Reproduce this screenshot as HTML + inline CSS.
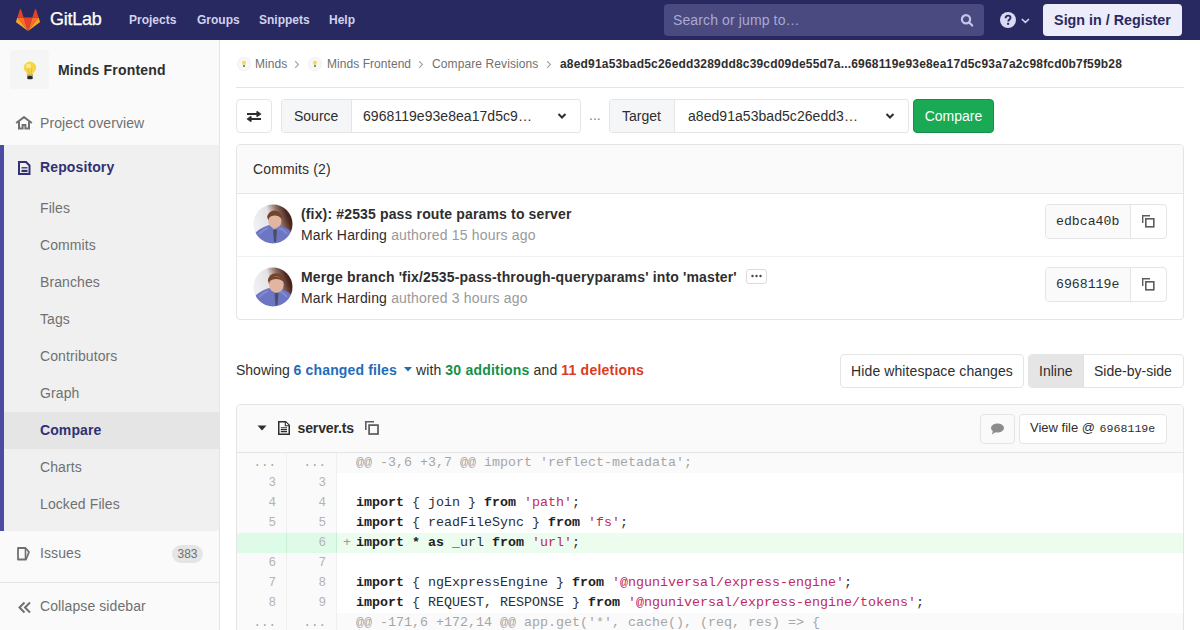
<!DOCTYPE html>
<html><head><meta charset="utf-8">
<style>
*{box-sizing:border-box;margin:0;padding:0}
html,body{width:1200px;height:630px;overflow:hidden;background:#fff}
body{font-family:"Liberation Sans",sans-serif;font-size:14px;color:#2e2e2e;position:relative}
.a{position:absolute;white-space:nowrap}
.t14{font-size:14px;line-height:16px}
.t12{font-size:12px;line-height:14px}
.t13{font-size:13px;line-height:15px}
.b{font-weight:bold;letter-spacing:0.15px}
.mono{font-family:"Liberation Mono",monospace}
/* header */
#hdr{position:absolute;left:0;top:0;width:1200px;height:40px;background:#292961}
.nav{font-size:12px;line-height:14px;font-weight:bold;color:#d2d2ee;top:13px}
/* sidebar */
#side{position:absolute;left:0;top:40px;width:220px;height:590px;background:#fafafa;border-right:1px solid #e5e5e5}
.si{color:#707070;font-size:14px;line-height:16px;left:40px;letter-spacing:0.1px}
.box{position:absolute;border:1px solid #e5e5e5;border-radius:4px;background:#fff}
.code{font-family:"Liberation Mono",monospace;font-size:13.33px;line-height:20px}
.row{position:absolute;left:237px;width:946px;height:20px}
.ln{position:absolute;top:0;height:20px;width:50px;background:#fafafa;border-right:1px solid #f0f0f0;color:#b3b3b3;text-align:right;padding-right:10px;font-family:"Liberation Mono",monospace;font-size:12.5px;line-height:20px}
.ln1{left:0}.ln2{left:50px}
.txt{position:absolute;left:100px;top:0;right:0;height:20px;padding-left:19px;white-space:pre;font-family:"Liberation Mono",monospace;font-size:13.33px;line-height:20px;color:#2e2e2e}
.match .ln,.match .txt{background:#fafafa;color:#a6a6a6}
.k{font-weight:bold;color:#222}
.s{color:#bf2a5c}
.add .txt{background:#ecfdf0}
.add .ln{background:#ddfbe6;border-right-color:#c7f0d2}
</style></head><body>
<div id="hdr">
  <svg class="a" style="left:16px;top:9px" width="24" height="22" viewBox="0 0 36 33">
    <path fill="#e24329" d="M18 33l6.6-20.4H11.4z"/>
    <path fill="#fc6d26" d="M18 33L11.4 12.6H2.1z"/>
    <path fill="#fca326" d="M2.1 12.6L.1 18.8c-.2.6 0 1.2.5 1.6L18 33z"/>
    <path fill="#e24329" d="M2.1 12.6h9.3L7.4.4c-.2-.6-1.1-.6-1.3 0z"/>
    <path fill="#fc6d26" d="M18 33l6.6-20.4h9.3z"/>
    <path fill="#fca326" d="M33.9 12.6l2 6.2c.2.6 0 1.2-.5 1.6L18 33z"/>
    <path fill="#e24329" d="M33.9 12.6h-9.3L28.6.4c.2-.6 1.1-.6 1.3 0z"/>
  </svg>
  <div class="a" style="left:50px;top:9px;font-size:18px;line-height:20px;color:#fff;letter-spacing:-0.25px;-webkit-text-stroke:0.25px #fff">GitLab</div>
  <div class="a nav" style="left:129px">Projects</div>
  <div class="a nav" style="left:197px">Groups</div>
  <div class="a nav" style="left:259px">Snippets</div>
  <div class="a nav" style="left:329px">Help</div>
  <div class="a" style="left:664px;top:4px;width:320px;height:32px;background:#4a4a80;border-radius:4px"></div>
  <div class="a t14" style="left:673px;top:12px;color:#a9a9d2;letter-spacing:0.12px">Search or jump to…</div>
  <svg class="a" style="left:960px;top:13px" width="14" height="14" viewBox="0 0 14 14"><circle cx="6" cy="6.3" r="4.1" fill="none" stroke="#c6c6ec" stroke-width="2.2"/><path d="M9.2 9.5l3 3" stroke="#c6c6ec" stroke-width="2.2" stroke-linecap="round"/></svg>
  <svg class="a" style="left:1000px;top:12px" width="32" height="17" viewBox="0 0 32 17"><circle cx="8" cy="8" r="8" fill="#dadaf4"/><path d="M5.6 6.2c0-1.6 1.1-2.6 2.5-2.6s2.4.9 2.4 2.2c0 1.6-2.2 1.8-2.2 3.6" fill="none" stroke="#292961" stroke-width="1.9"/><rect x="7.1" y="10.8" width="2" height="2" fill="#292961"/><path d="M21.8 7l3.6 3.4L29 7" fill="none" stroke="#d2d2ee" stroke-width="1.6"/></svg>
  <div class="a" style="left:1043px;top:4px;width:139px;height:32px;background:#ececfa;border-radius:4px"></div>
  <div class="a t14" style="left:1043px;top:12px;width:139px;text-align:center;font-weight:bold;color:#292961;font-size:14.3px">Sign in / Register</div>
</div>

<div id="side"></div>
<!-- sidebar content (page coords) -->
<div class="a" style="left:10px;top:50px;width:39px;height:39px;background:#f5f5f5;border-radius:4px"></div>
<svg class="a" style="left:23px;top:61px" width="14" height="19" viewBox="0 0 14 19">
  <path d="M7 0.8C3.6 0.8 0.8 3.3 0.8 6.5c0 2.2 1.2 3.4 2.2 4.6.7.9.9 1.8.9 2.6h6.2c0-.8.2-1.7.9-2.6 1-1.2 2.2-2.4 2.2-4.6C13.2 3.3 10.4 0.8 7 0.8z" fill="#f6d646"/>
  <ellipse cx="5.5" cy="5" rx="2.5" ry="2.3" fill="#faeb90"/>
  <path d="M5.2 7.5l1 6M8.8 7.5l-1 6" stroke="#e0b020" stroke-width="0.7" fill="none"/>
  <rect x="3.9" y="13.5" width="6.2" height="1.6" fill="#b0a070"/>
  <rect x="4.2" y="15" width="5.6" height="3.3" rx="1.4" fill="#2a2a2a"/>
</svg>
<div class="a t14 b" style="left:58px;top:62px;color:#2e2e2e;letter-spacing:0.2px">Minds Frontend</div>

<svg class="a" style="left:15px;top:116px" width="18" height="14" viewBox="0 0 18 14"><path d="M1.2 7L9 1.2 16.8 7" fill="none" stroke="#707070" stroke-width="2.1" stroke-linejoin="miter"/><path d="M4 5.5V12.5h3.6V9h2.8v3.5H14V5.5" fill="none" stroke="#707070" stroke-width="2"/></svg>
<div class="a si" style="top:115px">Project overview</div>

<div class="a" style="left:0;top:145px;width:219px;height:386px;background:#f0f0f0"></div>
<div class="a" style="left:0;top:145px;width:4px;height:386px;background:#4b4ba3"></div>
<div class="a" style="left:4px;top:412px;width:215px;height:37px;background:#e5e5e5"></div>
<svg class="a" style="left:18px;top:161px" width="13" height="14" viewBox="0 0 13 14"><path d="M1 1h7l3.5 3.5V13H1z" fill="none" stroke="#303073" stroke-width="2" stroke-linejoin="miter"/><path d="M3.5 6.8h6" stroke="#303073" stroke-width="1.3"/><rect x="3.5" y="8.8" width="6" height="2.3" fill="#303073"/></svg>
<div class="a t14" style="left:40px;top:159px;font-weight:bold;color:#303073;letter-spacing:0.12px">Repository</div>
<div class="a si" style="top:200px">Files</div>
<div class="a si" style="top:237px">Commits</div>
<div class="a si" style="top:274px">Branches</div>
<div class="a si" style="top:311px">Tags</div>
<div class="a si" style="top:348px">Contributors</div>
<div class="a si" style="top:385px">Graph</div>
<div class="a si" style="top:422px;font-weight:bold;color:#303073">Compare</div>
<div class="a si" style="top:459px">Charts</div>
<div class="a si" style="top:496px">Locked Files</div>

<svg class="a" style="left:16px;top:546px" width="16" height="15" viewBox="0 0 16 15"><path d="M2 2h7.5l3.5 4-3 7.5H2z" fill="none" stroke="#707070" stroke-width="1.8" stroke-linejoin="round"/><path d="M9.5 2v11.5" stroke="#707070" stroke-width="1.6"/></svg>
<div class="a si" style="top:545px">Issues</div>
<div class="a" style="left:172px;top:545px;width:31px;height:18px;border-radius:9px;background:#e5e5e5"></div>
<div class="a t12" style="left:172px;top:547px;width:31px;text-align:center;color:#707070">383</div>
<div class="a" style="left:0;top:582px;width:219px;height:1px;background:#e5e5e5"></div>
<svg class="a" style="left:17px;top:601px" width="15" height="13" viewBox="0 0 15 13"><path d="M7.5 1.5L2.5 6.5l5 5M13 1.5L8 6.5l5 5" fill="none" stroke="#707070" stroke-width="2"/></svg>
<div class="a si" style="top:598px">Collapse sidebar</div>

<!-- MAIN -->
<svg class="a" style="left:237px;top:57px" width="14" height="14" viewBox="0 0 14 14"><circle cx="7" cy="7" r="6.6" fill="#f7f7f7" stroke="#ececec" stroke-width="0.7"/><path d="M7 3.6c-1.2 0-2 .8-2 1.9 0 .9.7 1.5.9 2.4h2.2c.2-.9.9-1.5.9-2.4 0-1.1-.8-1.9-2-1.9z" fill="#f1dc6a"/><rect x="6.1" y="8.3" width="1.8" height="1.5" rx="0.5" fill="#444"/></svg>
<div class="a t12" style="left:255px;top:57px;color:#707070;letter-spacing:0.05px">Minds</div>
<svg class="a" style="left:294px;top:60px" width="6" height="9" viewBox="0 0 6 9"><path d="M1.2 1.2l3.2 3.3-3.2 3.3" fill="none" stroke="#a0a0a0" stroke-width="1.1"/></svg>
<svg class="a" style="left:308px;top:57px" width="14" height="14" viewBox="0 0 14 14"><circle cx="7" cy="7" r="6.6" fill="#f7f7f7" stroke="#ececec" stroke-width="0.7"/><path d="M7 3.6c-1.2 0-2 .8-2 1.9 0 .9.7 1.5.9 2.4h2.2c.2-.9.9-1.5.9-2.4 0-1.1-.8-1.9-2-1.9z" fill="#f1dc6a"/><rect x="6.1" y="8.3" width="1.8" height="1.5" rx="0.5" fill="#444"/></svg>
<div class="a t12" style="left:327px;top:57px;color:#707070;letter-spacing:0.05px">Minds Frontend</div>
<svg class="a" style="left:418px;top:60px" width="6" height="9" viewBox="0 0 6 9"><path d="M1.2 1.2l3.2 3.3-3.2 3.3" fill="none" stroke="#a0a0a0" stroke-width="1.1"/></svg>
<div class="a t12" style="left:432px;top:57px;color:#707070;letter-spacing:0.1px">Compare Revisions</div>
<svg class="a" style="left:546px;top:60px" width="6" height="9" viewBox="0 0 6 9"><path d="M1.2 1.2l3.2 3.3-3.2 3.3" fill="none" stroke="#a0a0a0" stroke-width="1.1"/></svg>
<div class="a t12" style="left:560px;top:57px;font-weight:bold;color:#2e2e2e;letter-spacing:0.18px">a8ed91a53bad5c26edd3289dd8c39cd09de55d7a...6968119e93e8ea17d5c93a7a2c98fcd0b7f59b28</div>
<div class="a" style="left:236px;top:87px;width:948px;height:1px;background:#e5e5e5"></div>

<!-- compare form -->
<div class="box" style="left:236px;top:99px;width:36px;height:34px"></div>
<svg class="a" style="left:246px;top:111px" width="16" height="11" viewBox="0 0 16 11"><path d="M1 3h13M10.5 0.5L14 3l-3.5 2.5M15 8H2M5.5 5.5L2 8l3.5 2.5" fill="none" stroke="#2e2e2e" stroke-width="1.8"/></svg>

<div class="box" style="left:281px;top:99px;width:300px;height:34px;overflow:hidden;border-radius:3px">
  <div class="a" style="left:0;top:0;width:70px;height:32px;background:#f5f6f7;border-right:1px solid #e5e5e5"></div>
</div>
<div class="a t14" style="left:294px;top:108px">Source</div>
<div class="a t14" style="left:363px;top:108px;letter-spacing:0.05px">6968119e93e8ea17d5c9…</div>
<svg class="a" style="left:557px;top:112px" width="10" height="8" viewBox="0 0 10 8"><path d="M1.5 2l3.5 3.5L8.5 2" fill="none" stroke="#2e2e2e" stroke-width="2"/></svg>
<div class="a t14" style="left:589px;top:107px;color:#808080">...</div>

<div class="box" style="left:609px;top:99px;width:300px;height:34px;overflow:hidden;border-radius:3px">
  <div class="a" style="left:0;top:0;width:65px;height:32px;background:#f5f6f7;border-right:1px solid #e5e5e5"></div>
</div>
<div class="a t14" style="left:622px;top:108px">Target</div>
<div class="a t14" style="left:688px;top:108px;letter-spacing:0.05px">a8ed91a53bad5c26edd3…</div>
<svg class="a" style="left:885px;top:112px" width="10" height="8" viewBox="0 0 10 8"><path d="M1.5 2l3.5 3.5L8.5 2" fill="none" stroke="#2e2e2e" stroke-width="2"/></svg>

<div class="a" style="left:913px;top:99px;width:81px;height:34px;background:#1aaa55;border:1px solid #168f48;border-radius:4px"></div>
<div class="a t14" style="left:913px;top:108px;width:81px;text-align:center;color:#fff">Compare</div>

<!-- commits -->
<div class="box" style="left:236px;top:144px;width:948px;height:176px;overflow:hidden">
  <div class="a" style="left:0;top:0;width:946px;height:49px;background:#fafafa;border-bottom:1px solid #e5e5e5"></div>
  <div class="a" style="left:0;top:111px;width:946px;height:1px;background:#f0f0f0"></div>
</div>
<div class="a t14" style="left:253px;top:161px;letter-spacing:0.15px">Commits (2)</div>

<svg class="a" style="left:253px;top:204px" width="40" height="40" viewBox="0 0 40 40">
  <defs><clipPath id="cc1"><circle cx="20" cy="20" r="19.5"/></clipPath><linearGradient id="bg1" x1="0" y1="0.35" x2="1" y2="0"><stop offset="0" stop-color="#f0f0f4"/><stop offset="0.38" stop-color="#e4e2e4"/><stop offset="0.6" stop-color="#8a6a60"/><stop offset="0.78" stop-color="#4e2820"/><stop offset="1" stop-color="#2a120c"/></linearGradient><filter id="blr" x="-10%" y="-10%" width="120%" height="120%"><feGaussianBlur stdDeviation="0.5"/></filter></defs>
  <g clip-path="url(#cc1)"><g filter="url(#blr)">
    <rect width="40" height="40" fill="url(#bg1)"/>
    <path d="M0 40V32c3-5 8-8 12-9.5l4-1.5 5 2 5-2 5 2c4 1.5 7 4 9 8V40z" fill="#6c76c2"/>
    <path d="M6 30c3-3 6-5 9-6M26 24c3 1 6 3 8 6" stroke="#7f8ad0" stroke-width="2" fill="none"/>
    <path d="M17.5 21l4 6 4-6z" fill="#c9a090"/>
    <path d="M20.0 26l1 12h2l1-12-2-1z" fill="#4a4f6a"/>
    <ellipse cx="21.5" cy="13.0" rx="7.1" ry="6.5" fill="#74442c"/><ellipse cx="21.9" cy="17.0" rx="6.6" ry="7.2" fill="#e0b6a2"/><path d="M15.0 13.5c1.5-2.5 3.5-3.2 6.8 -3.2s4.8 .6 6.6 2.6" stroke="#74442c" stroke-width="2.2" fill="none"/>
  </g></g>
</svg>
<div class="a t14 b" style="left:301px;top:206px">(fix): #2535 pass route params to server</div>
<div class="a t14" style="left:301px;top:227px"><span style="letter-spacing:0.17px">Mark Harding <span style="color:#999">authored 15 hours ago</span></span></div>
<div class="a" style="left:1045px;top:204px;width:122px;height:35px;border:1px solid #e5e5e5;border-radius:4px;overflow:hidden;background:#fff">
  <div class="a" style="left:0;top:0;width:85px;height:33px;background:#fafafa;border-right:1px solid #e5e5e5"></div>
</div>
<div class="a mono" style="left:1056px;top:214px;font-size:13.2px;line-height:16px;color:#2e2e2e">edbca40b</div>
<svg class="a" style="left:1141px;top:214px" width="15" height="15" viewBox="0 0 15 15"><path d="M1.7 9V1.7H9" fill="none" stroke="#5c5c5c" stroke-width="1.4"/><rect x="4.8" y="4.8" width="8" height="8" fill="none" stroke="#5c5c5c" stroke-width="1.6"/></svg>

<svg class="a" style="left:253px;top:267px" width="40" height="40" viewBox="0 0 40 40">
  <defs><clipPath id="cc2"><circle cx="20" cy="20" r="19.5"/></clipPath></defs>
  <g clip-path="url(#cc2)"><g filter="url(#blr)">
    <rect width="40" height="40" fill="url(#bg1)"/>
    <path d="M0 40V32c3-5 8-8 12-9.5l4-1.5 5 2 5-2 5 2c4 1.5 7 4 9 8V40z" fill="#6c76c2"/>
    <path d="M6 30c3-3 6-5 9-6M26 24c3 1 6 3 8 6" stroke="#7f8ad0" stroke-width="2" fill="none"/>
    <path d="M19 21.5l4 6 4-6z" fill="#c9a090"/>
    <path d="M21.5 26.5l1 12h2l1-12-2-1z" fill="#4a4f6a"/>
    <ellipse cx="23.0" cy="13.5" rx="7.8999999999999995" ry="7.300000000000001" fill="#74442c"/><ellipse cx="23.4" cy="17.5" rx="7.3999999999999995" ry="8.0" fill="#e0b6a2"/><path d="M15.700000000000001 14.0c1.5-2.5 3.5-3.2 7.6 -3.2s4.8 .6 7.3999999999999995 2.6" stroke="#74442c" stroke-width="2.2" fill="none"/>
  </g></g>
</svg>
<div class="a t14 b" style="left:301px;top:269px">Merge branch 'fix/2535-pass-through-queryparams' into 'master'</div>
<div class="a" style="left:746px;top:269px;width:21px;height:15px;border:1px solid #dcdcdc;border-radius:3px;background:#fff"></div>
<svg class="a" style="left:750px;top:274px" width="13" height="4" viewBox="0 0 13 4"><circle cx="2.5" cy="2" r="1.2" fill="#444"/><circle cx="6.5" cy="2" r="1.2" fill="#444"/><circle cx="10.5" cy="2" r="1.2" fill="#444"/></svg>
<div class="a t14" style="left:301px;top:290px"><span style="letter-spacing:0.17px">Mark Harding <span style="color:#999">authored 3 hours ago</span></span></div>
<div class="a" style="left:1045px;top:267px;width:122px;height:35px;border:1px solid #e5e5e5;border-radius:4px;overflow:hidden;background:#fff">
  <div class="a" style="left:0;top:0;width:85px;height:33px;background:#fafafa;border-right:1px solid #e5e5e5"></div>
</div>
<div class="a mono" style="left:1056px;top:277px;font-size:13.2px;line-height:16px;color:#2e2e2e">6968119e</div>
<svg class="a" style="left:1141px;top:277px" width="15" height="15" viewBox="0 0 15 15"><path d="M1.7 9V1.7H9" fill="none" stroke="#5c5c5c" stroke-width="1.4"/><rect x="4.8" y="4.8" width="8" height="8" fill="none" stroke="#5c5c5c" stroke-width="1.6"/></svg>

<!-- showing -->
<div class="a t14" style="left:236px;top:362px">Showing <span class="b" style="color:#1f6cb8">6 changed files</span></div>
<svg class="a" style="left:404px;top:367px" width="8" height="5" viewBox="0 0 8 5"><path d="M0 0h8L4 4.5z" fill="#1f6cb8"/></svg>
<div class="a t14" style="left:416px;top:362px;letter-spacing:0.1px">with <span class="b" style="color:#168f48;letter-spacing:0.22px">30 additions</span> and <span class="b" style="color:#db3b21;letter-spacing:0.22px">11 deletions</span></div>

<div class="box" style="left:840px;top:354px;width:184px;height:34px"></div>
<div class="a t14" style="left:840px;top:363px;width:184px;text-align:center;letter-spacing:0.1px">Hide whitespace changes</div>
<div class="box" style="left:1028px;top:354px;width:156px;height:34px;overflow:hidden">
  <div class="a" style="left:0;top:0;width:55px;height:32px;background:#e5e5e5;border-right:1px solid #e0e0e0"></div>
</div>
<div class="a t14" style="left:1039px;top:363px">Inline</div>
<div class="a t14" style="left:1094px;top:363px">Side-by-side</div>

<!-- file -->
<div class="box" style="left:236px;top:404px;width:948px;height:240px;overflow:hidden">
  <div class="a" style="left:0;top:0;width:946px;height:48px;background:#fafafa;border-bottom:1px solid #e5e5e5"></div>
</div>
<svg class="a" style="left:257px;top:425px" width="10" height="6" viewBox="0 0 10 6"><path d="M0.5 0.5h9L5 5.5z" fill="#2e2e2e"/></svg>
<svg class="a" style="left:278px;top:421px" width="12" height="14" viewBox="0 0 12 14"><path d="M0.75 0.75H7.6L11.25 4.4V13.25H0.75z" fill="none" stroke="#2e2e2e" stroke-width="1.5" stroke-linejoin="miter"/><path d="M7.3 0.9V4.7H11.1" fill="#fff" stroke="#2e2e2e" stroke-width="1.1"/><path d="M2.8 6.7h6.2M2.8 8.6h6.2M2.8 10.6h6.2" stroke="#2e2e2e" stroke-width="1.05"/></svg>
<div class="a t14 b" style="left:297.5px;top:420px;letter-spacing:-0.12px">server.ts</div>
<svg class="a" style="left:365px;top:421px" width="14" height="14" viewBox="0 0 14 14"><path d="M0.8 9V0.8H9" fill="none" stroke="#5e5e5e" stroke-width="1.6"/><rect x="4.1" y="4.1" width="8.9" height="8.9" fill="none" stroke="#5e5e5e" stroke-width="1.75"/></svg>

<div class="a" style="left:980px;top:414px;width:35px;height:30px;border:1px solid #e5e5e5;border-radius:4px;background:#fafafa"></div>
<svg class="a" style="left:990px;top:423px" width="15" height="12" viewBox="0 0 15 12"><ellipse cx="7.5" cy="5" rx="6.5" ry="4.5" fill="#8c8c8c"/><path d="M3 7.5L2 11.5 6.5 8.5z" fill="#8c8c8c"/></svg>
<div class="a" style="left:1019px;top:414px;width:148px;height:30px;border:1px solid #e5e5e5;border-radius:4px;background:#fff"></div>
<div class="a t13" style="left:1030px;top:420px">View file @ <span class="mono" style="font-size:11.6px;margin-left:1px">6968119e</span></div>

<!-- diff rows -->
<div class="row match" style="top:453px"><div class="ln ln1">...</div><div class="ln ln2">...</div><div class="txt">@@ -3,6 +3,7 @@ import 'reflect-metadata';</div></div>
<div class="row" style="top:473px"><div class="ln ln1">3</div><div class="ln ln2">3</div><div class="txt"> </div></div>
<div class="row" style="top:493px"><div class="ln ln1">4</div><div class="ln ln2">4</div><div class="txt"><span class="k">import</span> { join } <span class="k">from</span> <span class="s">'path'</span>;</div></div>
<div class="row" style="top:513px"><div class="ln ln1">5</div><div class="ln ln2">5</div><div class="txt"><span class="k">import</span> { readFileSync } <span class="k">from</span> <span class="s">'fs'</span>;</div></div>
<div class="row add" style="top:533px"><div class="ln ln1"></div><div class="ln ln2">6</div><div class="txt"><span class="a" style="left:6px;top:0;color:#999">+</span><span class="k">import</span> <span class="k">*</span> <span class="k">as</span> _url <span class="k">from</span> <span class="s">'url'</span>;</div></div>
<div class="row" style="top:553px"><div class="ln ln1">6</div><div class="ln ln2">7</div><div class="txt"> </div></div>
<div class="row" style="top:573px"><div class="ln ln1">7</div><div class="ln ln2">8</div><div class="txt"><span class="k">import</span> { ngExpressEngine } <span class="k">from</span> <span class="s">'@nguniversal/express-engine'</span>;</div></div>
<div class="row" style="top:593px"><div class="ln ln1">8</div><div class="ln ln2">9</div><div class="txt"><span class="k">import</span> { REQUEST, RESPONSE } <span class="k">from</span> <span class="s">'@nguniversal/express-engine/tokens'</span>;</div></div>
<div class="row match" style="top:613px"><div class="ln ln1">...</div><div class="ln ln2">...</div><div class="txt">@@ -171,6 +172,14 @@ app.get('*', cache(), (req, res) =&gt; {</div></div>
</body></html>
